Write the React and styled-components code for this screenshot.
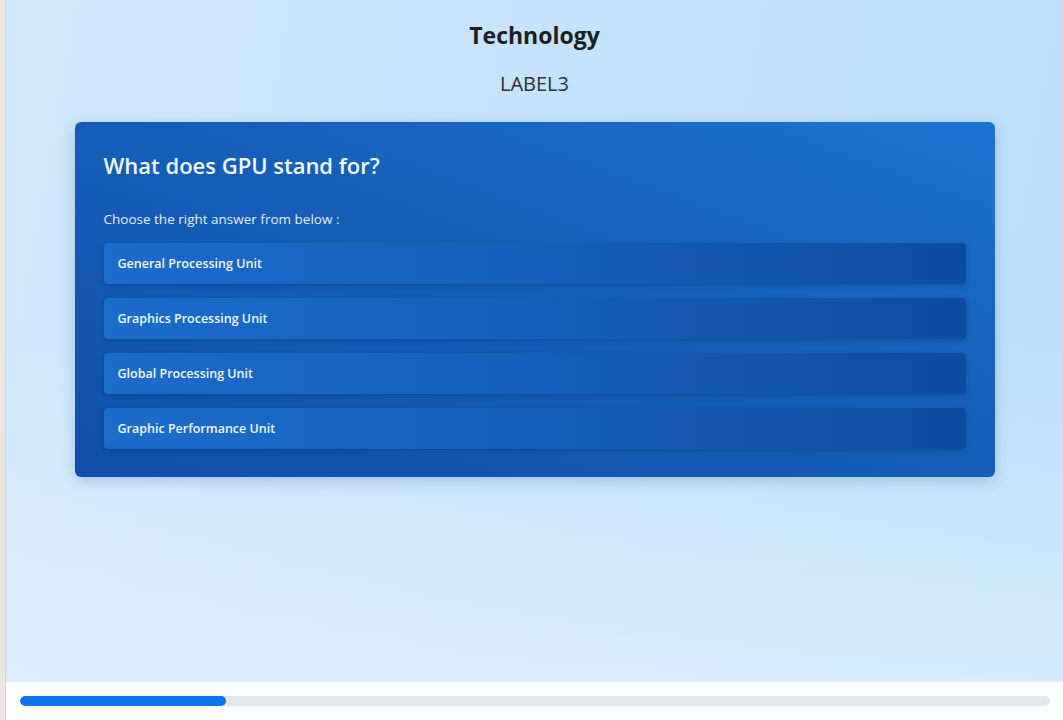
import styled, { createGlobalStyle } from "styled-components";

const GlobalStyles = createGlobalStyle`
  html, body {
    margin: 0;
    padding: 0;
    height: 100%;
  }
  body {
    font-family: "Open Sans", "Noto Sans", "Liberation Sans", sans-serif;
    background: #ece7e1;
  }
  #root {
    height: 100%;
  }
`;

const Frame = styled.div`
  display: flex;
  height: 720px;
  overflow: hidden;
`;

const Edge = styled.div`
  width: 5px;
  flex: none;
  background: #ebe6df;
  border-right: 1px solid #d6d3cf;
`;

const Page = styled.div`
  flex: 1;
  display: flex;
  flex-direction: column;
  min-width: 0;
`;

const Stage = styled.main`
  flex: 1;
  display: flex;
  flex-direction: column;
  align-items: center;
  padding-top: 20px;
  background: linear-gradient(
      to bottom,
      rgba(255, 255, 255, 0) 50%,
      rgba(230, 242, 253, 0.6) 100%
    ),
    linear-gradient(100deg, #d1e8fc 0%, #c4e2fb 55%, #bbdff9 100%);
`;

const Category = styled.h1`
  margin: 0;
  font-size: 23px;
  font-weight: 700;
  color: #1b1f24;
  line-height: 30px;
`;

const Label = styled.div`
  margin-top: 21px;
  font-size: 20px;
  color: #2a3038;
  line-height: 26px;
`;

const Card = styled.section`
  box-sizing: border-box;
  width: 920px;
  margin-top: 25px;
  padding: 28px 29px;
  border-radius: 6px;
  background: linear-gradient(200deg, #1b72d3 0%, #165fb9 45%, #0f4ea8 100%);
  box-shadow: 0 4px 14px rgba(20, 60, 120, 0.22);
`;

const Question = styled.h2`
  margin: 0;
  font-size: 22px;
  font-weight: 600;
  color: #f4f8fd;
  line-height: 30px;
`;

const Prompt = styled.p`
  margin: 30px 0 15px;
  font-size: 13.5px;
  color: #e3edf9;
  line-height: 18px;
`;

const Options = styled.div`
  display: flex;
  flex-direction: column;
  gap: 14px;
`;

const Option = styled.button`
  display: flex;
  align-items: center;
  height: 41px;
  padding: 0 14px;
  border: none;
  border-radius: 4px;
  font-family: inherit;
  font-size: 12.5px;
  font-weight: 600;
  color: #f3f7fc;
  text-align: left;
  cursor: pointer;
  background: linear-gradient(90deg, #1b6ccc 0%, #1660bd 45%, #0f4aa1 100%);
  box-shadow: 0 2px 4px rgba(5, 30, 80, 0.25);
`;

const Footer = styled.footer`
  height: 38px;
  flex: none;
  display: flex;
  align-items: center;
  padding: 0 13px 0 14px;
  background: #fbfdfe;
  border-top: 1px solid #e4edf5;
`;

const Track = styled.div`
  flex: 1;
  height: 10px;
  border-radius: 5px;
  background: #e3e6ea;
  overflow: hidden;
`;

const Fill = styled.div`
  height: 100%;
  border-radius: 5px;
  background: #0a74ee;
`;

const options = [
  "General Processing Unit",
  "Graphics Processing Unit",
  "Global Processing Unit",
  "Graphic Performance Unit",
];

function App() {
  const progress = 20;
  return (
    <>
      <GlobalStyles />
      <Frame>
        <Edge />
        <Page>
          <Stage>
            <Category>Technology</Category>
            <Label>LABEL3</Label>
            <Card>
              <Question>What does GPU stand for?</Question>
              <Prompt>Choose the right answer from below :</Prompt>
              <Options>
                {options.map((o) => (
                  <Option key={o}>{o}</Option>
                ))}
              </Options>
            </Card>
          </Stage>
          <Footer>
            <Track>
              <Fill style={{ width: `${progress}%` }} />
            </Track>
          </Footer>
        </Page>
      </Frame>
    </>
  );
}

export default App;
